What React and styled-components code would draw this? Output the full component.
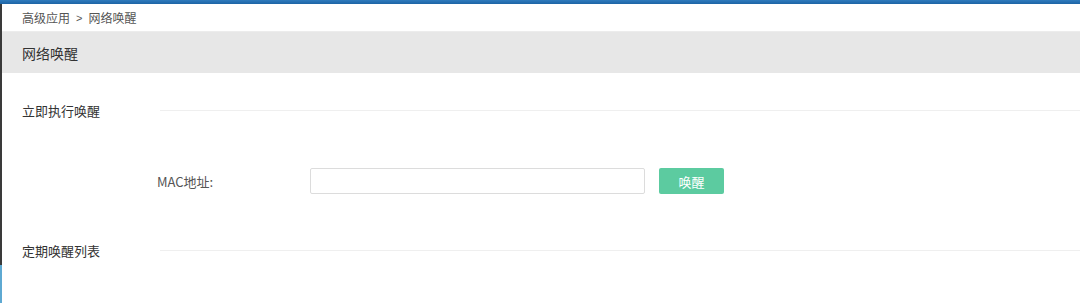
import React, { useState } from 'react';
import styled, { createGlobalStyle } from 'styled-components';

const GlobalStyle = createGlobalStyle`
  html, body {
    margin: 0;
    padding: 0;
    background: #fff;
    font-family: "Noto Sans CJK SC", "Noto Sans", "Liberation Sans", sans-serif;
  }
`

const Page = styled.div`
  display: flex;
  flex-direction: column;
  height: 303px;
`
const TopBar = styled.div`
  height: 4px;
  background: linear-gradient(#2f7bbd, #1d64a5);
`
const Body = styled.div`
  flex: 1;
  display: flex;
`
const Edge = styled.div`
  width: 2px;
  background: linear-gradient(#3a3a3a 0 261px, #5ea9d2 261px);
`
const Content = styled.div`
  flex: 1;
  display: flex;
  flex-direction: column;
  background: #fff;
`
const Breadcrumb = styled.div`
  height: 27px;
  display: flex;
  align-items: center;
  padding-left: 20px;
  font-size: 12px;
  color: #555;
`
const Sep = styled.span`
  margin: 0 6px;
  font-family: "Liberation Sans", sans-serif;
  font-size: 11px;
`
const HeaderBand = styled.div`
  height: 42px;
  display: flex;
  align-items: center;
  padding-left: 20px;
  background: #e7e7e7;
  border-top: 1px solid #ececec;
  box-sizing: border-box;
  font-size: 14px;
  color: #333;
`
const SectionHead = styled.div`
  display: flex;
  align-items: center;
  height: 20px;
  margin-top: ${p => p.$top}px;
  padding-left: 20px;
`
const SectionTitle = styled.div`
  width: 138px;
  font-size: 13px;
  color: #333;
`
const Rule = styled.div`
  flex: 1;
  height: 1px;
  background: #efefef;
`
const FormRow = styled.div`
  display: flex;
  align-items: center;
  margin-top: 48px;
  padding-left: 155px;
`
const Label = styled.label`
  width: 153px;
  font-size: 13px;
  color: #555;
`
const Input = styled.input`
  width: 335px;
  height: 26px;
  box-sizing: border-box;
  border: 1px solid #dcdcdc;
  border-radius: 2px;
  outline: none;
  padding: 0 8px;
  font-size: 13px;
`
const WakeButton = styled.button`
  margin-left: 14px;
  width: 65px;
  height: 26px;
  border: none;
  border-radius: 2px;
  background: #5ccba0;
  color: #fff;
  font-family: inherit;
  font-size: 13px;
  cursor: pointer;
`

export default function App() {
  const [mac, setMac] = useState('');

  return (
    <Page>
      <GlobalStyle />
      <TopBar />
      <Body>
        <Edge />
        <Content>
          <Breadcrumb>
            高级应用<Sep>&gt;</Sep>网络唤醒
          </Breadcrumb>
          <HeaderBand>网络唤醒</HeaderBand>

          <SectionHead $top={27}>
            <SectionTitle>立即执行唤醒</SectionTitle>
            <Rule />
          </SectionHead>
          <FormRow>
            <Label>MAC地址:</Label>
            <Input value={mac} onChange={e => setMac(e.target.value)} />
            <WakeButton>唤醒</WakeButton>
          </FormRow>

          <SectionHead $top={46}>
            <SectionTitle>定期唤醒列表</SectionTitle>
            <Rule />
          </SectionHead>
        </Content>
      </Body>
    </Page>
  );
}
